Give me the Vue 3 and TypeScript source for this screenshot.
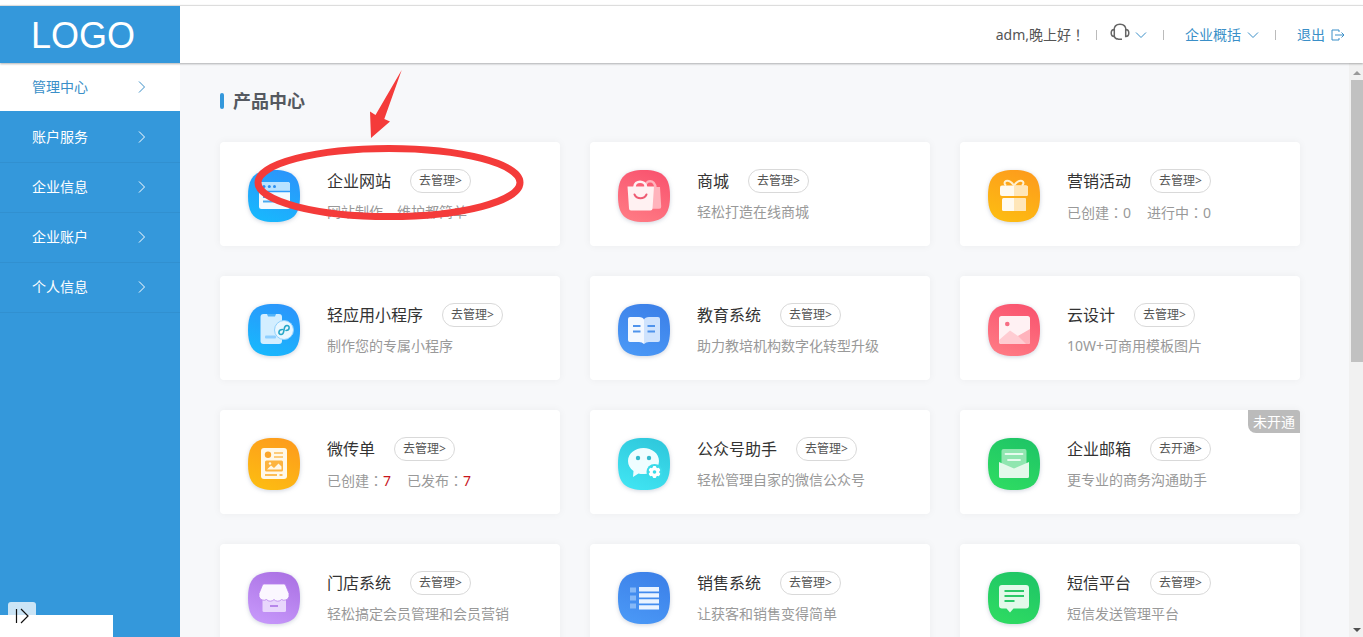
<script setup lang="ts">
import { ref } from 'vue'

interface Stat {
  label: string
  value: number
}
interface Product {
  id: string
  name: string
  action: string
  colors: [string, string]
  desc?: string
  stats?: Stat[]
  hot?: boolean
  badge?: string
}

const navItems = ['管理中心', '账户服务', '企业信息', '企业账户', '个人信息']
const active = ref('管理中心')

const blue: [string, string] = ['#2b95fb', '#18b8fd']
const royal: [string, string] = ['#3c80e8', '#4a98f6']
const pink: [string, string] = ['#f9546f', '#ff7a84']
const amber: [string, string] = ['#fd9c1c', '#fdbc12']
const green: [string, string] = ['#1fc566', '#2edb62']

const products: Product[] = [
  { id: 'site', name: '企业网站', action: '去管理>', desc: '网站制作、维护都简单', colors: blue },
  { id: 'mall', name: '商城', action: '去管理>', desc: '轻松打造在线商城', colors: pink },
  { id: 'gift', name: '营销活动', action: '去管理>', stats: [{ label: '已创建', value: 0 }, { label: '进行中', value: 0 }], colors: amber },
  { id: 'app', name: '轻应用小程序', action: '去管理>', desc: '制作您的专属小程序', colors: blue },
  { id: 'edu', name: '教育系统', action: '去管理>', desc: '助力教培机构数字化转型升级', colors: royal },
  { id: 'design', name: '云设计', action: '去管理>', desc: '10W+可商用模板图片', colors: pink },
  { id: 'flyer', name: '微传单', action: '去管理>', stats: [{ label: '已创建', value: 7 }, { label: '已发布', value: 7 }], hot: true, colors: amber },
  { id: 'wechat', name: '公众号助手', action: '去管理>', desc: '轻松管理自家的微信公众号', colors: ['#2fc8dc', '#40e4f2'] },
  { id: 'mail', name: '企业邮箱', action: '去开通>', desc: '更专业的商务沟通助手', badge: '未开通', colors: green },
  { id: 'store', name: '门店系统', action: '去管理>', desc: '轻松搞定会员管理和会员营销', colors: ['#ab72e4', '#c697fa'] },
  { id: 'sales', name: '销售系统', action: '去管理>', desc: '让获客和销售变得简单', colors: royal },
  { id: 'sms', name: '短信平台', action: '去管理>', desc: '短信发送管理平台', colors: green },
]

const gearTeeth = [0, 60, 120, 180, 240, 300]
</script>

<template>
  <div class="page">
    <header class="header">
      <div class="logo">LOGO</div>
      <div class="tools">
        <span class="greet">adm,晚上好<span class="mark">！</span></span>
        <i class="sep"></i>
        <button class="tool support" type="button" aria-label="客服">
          <svg class="headset" width="20" height="20" viewBox="0 0 20 20" fill="none" stroke="#666" stroke-width="1.5">
            <path d="M4 7.500C4 3.500 6.500 1.200 10 1.200S16 3.500 16 7.500" />
            <path d="M4.300 6.500C2 6.500 1.200 8 1.200 10s.8 3.500 3.100 3.500zM15.700 6.500c2.300 0 3.100 1.500 3.100 3.500s-.8 3.500-3.100 3.500z" />
            <path d="M4.300 13.500c.6 2 1.900 2.600 4 2.600M8 16.200h4" />
          </svg>
          <svg class="down" width="12" height="8" viewBox="0 0 12 8"><path d="M1 1.500l5 5 5-5" /></svg>
        </button>
        <i class="sep"></i>
        <button class="tool overview" type="button">
          企业概括
          <svg class="down" width="12" height="8" viewBox="0 0 12 8"><path d="M1 1.500l5 5 5-5" /></svg>
        </button>
        <i class="sep"></i>
        <a class="tool logout" href="#">
          退出
          <svg class="down" width="14" height="12" viewBox="0 0 14 12"><path d="M8 3V1H1v10h7V9M4 6h9M10.500 3.500L13 6l-2.500 2.500" /></svg>
        </a>
      </div>
    </header>

    <div class="body">
      <nav class="side">
        <a v-for="item in navItems" :key="item" href="#" class="nav" :class="{ on: item === active }" @click.prevent="active = item">
          {{ item }}
          <svg width="8" height="14" viewBox="0 0 8 14"><path d="M1 1.500L6.500 7 1 12.500" /></svg>
        </a>
      </nav>

      <main class="main">
        <h1 class="heading">产品中心</h1>
        <div class="grid">
          <section v-for="p in products" :key="p.id" class="card">
            <svg class="icon" viewBox="0 0 52 52" width="52" height="52" aria-hidden="true">
              <defs>
                <linearGradient :id="'bg-' + p.id" x1="0.7" y1="0" x2="0.3" y2="1">
                  <stop offset="0" :stop-color="p.colors[0]" />
                  <stop offset="1" :stop-color="p.colors[1]" />
                </linearGradient>
              </defs>
              <path :fill="`url(#bg-${p.id})`" d="M26 0C45 0 52 7 52 26S45 52 26 52 0 45 0 26 7 0 26 0Z" />
              <g v-if="p.id === 'site'">
                <rect x="11" y="12" width="31" height="27" rx="2.500" fill="#f3faff" />
                <path d="M11 21v-6.500a2.500 2.500 0 0 1 2.500-2.500h26a2.500 2.500 0 0 1 2.500 2.500V21z" fill="#b9e2ff" />
                <path d="M11 21.500h31" stroke="#2f9cfb" stroke-width="1.500" />
                <g fill="#2b8ff0"><circle cx="16" cy="16.500" r="1.500" /><circle cx="21.300" cy="16.500" r="1.500" /><circle cx="26.500" cy="16.500" r="1.500" /></g>
                <path d="M15 27h9M15 31.500h15" stroke="#4aa9ef" stroke-width="1.800" />
              </g>
              <g v-else-if="p.id === 'mall'">
                <path d="M27 17h15l1.200 19.500a2 2 0 0 1-2 2.200H30z" fill="#ffb3bc" />
                <path d="M27 18c0-9 10-9 10.500 0" fill="none" stroke="#ffb3bc" stroke-width="2.500" />
                <path d="M9.500 16.500h26.500l-1.500 22a2 2 0 0 1-2 2H13a2 2 0 0 1-2-2z" fill="#fff1f2" />
                <path d="M16.500 17c0-7 11-7 11.500 0" fill="none" stroke="#fff1f2" stroke-width="2.700" />
                <path d="M16.500 24.500c2.500 5 9.500 5 12 0" fill="none" stroke="#ee5b73" stroke-width="2" stroke-linecap="round" />
              </g>
              <g v-else-if="p.id === 'gift'">
                <path d="M26 15.500c-3-4-6-5-8-4.500-2 .8-2 3 0 4.500M26 15.500c3-4 6-5 8-4.500 2 .8 2 3 0 4.500" fill="none" stroke="#fff0cf" stroke-width="2" />
                <rect x="12" y="15.500" width="28" height="10.500" rx="2" fill="#fffaf0" />
                <path d="M26 15.500h12a2 2 0 0 1 2 2V24a2 2 0 0 1-2 2H26z" fill="#ffe6b8" />
                <rect x="14" y="28" width="24" height="13" rx="1.500" fill="#fffaf0" />
                <path d="M26 28h10.500a1.500 1.500 0 0 1 1.500 1.500v10a1.500 1.500 0 0 1-1.500 1.500H26z" fill="#ffe6b8" />
              </g>
              <g v-else-if="p.id === 'app'">
                <rect x="12.500" y="10" width="21.500" height="30" rx="3" fill="#d3eeff" />
                <path d="M19 10h9l-1 2.500h-7z" fill="#52b4fa" />
                <rect x="17" y="31.500" width="11" height="3" rx="1" fill="#8fcfff" />
                <circle cx="36" cy="26" r="9.500" fill="#e9f7ff" stroke="#8fd0fd" />
                <path d="M34.500 25.500c-4.500 0-4.500 5-1.500 5s2.500-3 3-4.500 0-4.500 3-4.500 3 5-1 5" fill="none" stroke="#27a7c8" stroke-width="1.600" stroke-linecap="round" />
              </g>
              <g v-else-if="p.id === 'edu'">
                <path d="M10 15a2 2 0 0 1 2-2h9q4 0 5 2.500V40q-2-2-5-2h-9a2 2 0 0 1-2-2z" fill="#f3f8ff" />
                <path d="M42 15a2 2 0 0 0-2-2h-9q-4 0-5 2.500V40q2-2 5-2h9a2 2 0 0 0 2-2z" fill="#cfe3fd" />
                <path d="M15 22h7.500M15 27.500h7.500M29.500 22H37M29.500 27.500H37" stroke="#4f93ec" stroke-width="2" />
              </g>
              <g v-else-if="p.id === 'design'">
                <rect x="11" y="12" width="31" height="28" rx="2.500" fill="#fff1f3" />
                <circle cx="19.300" cy="20" r="2.300" fill="#f76d84" />
                <path d="M11 37.500v-1.500l11-9.500 8 5.500 12-6v12a2 2 0 0 1-2 2H13.500a2.500 2.500 0 0 1-2.500-2.500z" fill="#ffccd2" />
                <path d="M30 32l12-7v13a2 2 0 0 1-2 2H38z" fill="#ffb3bc" />
              </g>
              <g v-else-if="p.id === 'flyer'">
                <rect x="13" y="10" width="26" height="31" rx="3" fill="#fff8e8" />
                <circle cx="20" cy="16.700" r="3.200" fill="#fba62a" />
                <path d="M26 15h9M26 19h9" stroke="#fdbd55" stroke-width="1.700" />
                <rect x="17" y="22.500" width="18" height="11" rx="1.500" fill="#fdb440" />
                <path d="M19 31.500l4-4 3 2.500 4.500-4.500 3 3v3z" fill="#fff8e8" />
                <circle cx="22" cy="25.500" r="1.200" fill="#fff8e8" />
                <path d="M17 37h12M31.500 37h3" stroke="#fdbd55" stroke-width="2" />
              </g>
              <g v-else-if="p.id === 'wechat'">
                <path d="M25.500 10C17 10 10 15.500 10 23c0 4 2 7.500 5.500 10l-.5 6 5.500-3.500c2 .6 4 .7 6 .5C34 36 41 30.500 41 23S34 10 25.500 10z" fill="#effdff" />
                <circle cx="20" cy="20" r="2.200" fill="#35b9cc" /><circle cx="31" cy="20" r="2.200" fill="#35b9cc" />
                <circle cx="36.500" cy="34" r="8" fill="#3bdbe9" />
                <g fill="#fff">
                  <circle cx="36.500" cy="34" r="4.800" />
                  <rect v-for="a in gearTeeth" :key="a" x="34.800" y="28" width="3.400" height="4" rx="1" :transform="`rotate(${a} 36.500 34)`" />
                </g>
                <circle cx="36.500" cy="34" r="1.800" fill="#3bdbe9" />
              </g>
              <g v-else-if="p.id === 'mail'">
                <path d="M13.500 13a2 2 0 0 1 2-2h21a2 2 0 0 1 2 2v14L26 33l-12.500-6z" fill="#90e6b0" />
                <path d="M17.500 16h17M20 22h12" stroke="#e6fbee" stroke-width="1.800" stroke-linecap="round" />
                <path d="M11 24l15 6.500L41 24v14.500a1.500 1.500 0 0 1-1.500 1.500h-27a1.500 1.500 0 0 1-1.500-1.500z" fill="#e3f9ea" />
              </g>
              <g v-else-if="p.id === 'store'">
                <path d="M14.500 25h23.500v13.500a1.500 1.500 0 0 1-1.500 1.500H16a1.500 1.500 0 0 1-1.500-1.500z" fill="#e8d6fc" />
                <path d="M16.500 12h19a2 2 0 0 1 2 1L41 21.500v3a5 5 0 0 1-7.500 3 5 5 0 0 1-7.500 0 5 5 0 0 1-7.500 0 5 5 0 0 1-7.500-3v-3L14.500 13a2 2 0 0 1 2-1z" fill="#fbf7ff" stroke="#b67fec" stroke-width="0.800" />
                <path d="M22 34h8" stroke="#b27de8" stroke-width="1.800" />
              </g>
              <g v-else-if="p.id === 'sales'">
                <path d="M12 15.500h6v5h-6zM12 23.500h6v5h-6zM12 31.500h6v5h-6z" fill="#86b8f7" />
                <path d="M21 15h20v4.500H21zM21 21.200h20v4.300H21zM21 27.300h20v4.200H21zM21 33.300h20v4.200H21z" fill="#eaf3ff" />
              </g>
              <g v-else>
                <path d="M14 13h24a3 3 0 0 1 3 3v17.500a3 3 0 0 1-3 3H25.500L22 40.500l-3.500-4H14a3 3 0 0 1-3-3V16a3 3 0 0 1 3-3z" fill="#e3f9ea" />
                <path d="M16.500 19H36M16.500 24H36M16.500 29h10" stroke="#2cc969" stroke-width="2" />
              </g>
            </svg>
            <div class="info">
              <div class="row">
                <h2 class="name">{{ p.name }}</h2>
                <button class="go" type="button">{{ p.action }}</button>
              </div>
              <p v-if="p.desc" class="desc">{{ p.desc }}</p>
              <p v-else class="desc stats">
                <span v-for="s in p.stats" :key="s.label">{{ s.label }}<span class="mark">：</span><span :class="{ hot: p.hot }">{{ s.value }}</span></span>
              </p>
            </div>
            <span v-if="p.badge" class="badge">{{ p.badge }}</span>
          </section>
        </div>
        <svg class="callout" width="310" height="160" viewBox="0 0 310 160" aria-hidden="true">
          <path d="M181.700 7L164.300 56 170 58.500 151 75 150 48.500 155.500 52z" fill="#f43b3a" />
          <ellipse cx="169" cy="119.500" rx="131" ry="34" fill="none" stroke="#f43b3a" stroke-width="7" />
        </svg>
      </main>

      <div class="scroll" aria-hidden="true">
        <i class="arrow up"></i>
        <div class="track"><div class="thumb"></div></div>
        <i class="arrow dn"></i>
      </div>
    </div>

    <div class="status">
      <button class="expand" type="button" aria-label="展开">
        <svg width="16" height="16" viewBox="0 0 16 16" fill="none" stroke="#111" stroke-width="1.200"><path d="M2.500 1v14M7 1l7 7-7 7" /></svg>
      </button>
    </div>
  </div>
</template>

<style>
body {
  margin: 0;
  overflow: hidden;
}
</style>

<style scoped>
.page {
  position: relative;
  display: flex;
  flex-direction: column;
  height: 100vh;
  box-sizing: border-box;
  padding-top: 5px;
  background: #fff;
  color: #333;
  font: 14px/20px "Noto Sans", "Noto Sans CJK SC", sans-serif;
}
button {
  margin: 0;
  padding: 0;
  border: 0;
  background: none;
  font: inherit;
  color: inherit;
  cursor: pointer;
}
a {
  text-decoration: none;
}
.mark {
  font-family: "Noto Sans CJK TC", sans-serif;
}
.header {
  position: relative;
  z-index: 2;
  flex: none;
  display: flex;
  justify-content: space-between;
  height: 57px;
  border-top: 1px solid #ddd;
  background: #fff;
  box-shadow: 0 1px 2px rgba(0, 0, 0, 0.3);
}
.logo {
  width: 180px;
  box-sizing: border-box;
  padding-left: 31px;
  background: #3498db;
  color: #fff;
  font: 36px/60px "Liberation Sans", Arial, sans-serif;
}
.tools {
  display: flex;
  align-items: center;
  padding-right: 18px;
}
.greet {
  color: #555;
}
.sep {
  width: 1px;
  height: 10px;
  background: #bbb;
}
.greet + .sep {
  margin-left: 11px;
}
.tool {
  display: flex;
  align-items: center;
  gap: 6px;
  color: #3a8fc8;
}
.support {
  gap: 5px;
  margin: 0 16px 0 13px;
}
.headset {
  margin-bottom: 4px;
}
.overview {
  margin: 0 16px 0 21px;
}
.logout {
  margin-left: 21px;
}
.down {
  fill: none;
  stroke: #3a8fc8;
  stroke-width: 1;
}
.body {
  flex: 1;
  min-height: 0;
  display: flex;
}
.side {
  flex: none;
  width: 180px;
  background: #3498db;
}
.nav {
  display: flex;
  align-items: center;
  justify-content: space-between;
  height: 47px;
  padding: 0 34px 2px 32px;
  border-bottom: 1px solid #3190d0;
  color: #fff;
}
.nav svg {
  fill: none;
  stroke: currentColor;
}
.nav.on {
  height: 48px;
  margin-bottom: 2px;
  padding-bottom: 0;
  border-bottom: 0;
  background: #fff;
  color: #3a8fc8;
}
.main {
  position: relative;
  flex: 1;
  min-width: 0;
  overflow: hidden;
  padding: 28px 49px 0 40px;
  background: #f7f8fa;
}
.heading {
  display: flex;
  align-items: center;
  gap: 9px;
  margin: 0 0 31px;
  color: #555960;
  font-size: 18px;
  line-height: 20px;
}
.heading::before {
  content: "";
  width: 4px;
  height: 16px;
  border-radius: 2px;
  background: #3498db;
}
.grid {
  display: grid;
  grid-template-columns: repeat(3, minmax(0, 1fr));
  gap: 30px;
}
.card {
  position: relative;
  display: flex;
  align-items: flex-end;
  gap: 27px;
  padding: 27px 28px 24px;
  border-radius: 4px;
  background: #fff;
  box-shadow: 0 0 8px rgba(0, 0, 0, 0.05);
}
.icon {
  flex: none;
  filter: drop-shadow(0 1px 2px rgba(60, 80, 120, 0.25));
}
.info {
  min-width: 0;
  white-space: nowrap;
}
.row {
  display: flex;
  align-items: center;
  gap: 19px;
  margin-bottom: 9px;
}
.name {
  margin: 0;
  font-size: 16px;
  font-weight: 400;
  line-height: 24px;
}
.go {
  height: 24px;
  padding: 0 8px;
  border: 1px solid #d9d9d9;
  border-radius: 12px;
  color: #555;
  font-size: 12px;
  line-height: 22px;
}
.desc {
  height: 20px;
  margin: 0;
  color: #999;
}
.stats {
  display: flex;
  gap: 16px;
}
.hot {
  color: #c8161d;
}
.badge {
  position: absolute;
  top: 0;
  right: 0;
  padding: 0 5px;
  border-radius: 0 3px 0 8px;
  background: #bbb;
  color: #fff;
  line-height: 23px;
}
.callout {
  position: absolute;
  left: 40px;
  top: 0;
  pointer-events: none;
}
.scroll {
  flex: none;
  display: flex;
  flex-direction: column;
  align-items: center;
  justify-content: space-between;
  width: 14px;
  box-sizing: border-box;
  padding: 8px 0 5px 2px;
  background: #f1f1f1;
}
.arrow {
  border: 4px solid transparent;
}
.up {
  border-top: 0;
  border-bottom-color: #999;
}
.dn {
  border-bottom: 0;
  border-top-color: #505050;
}
.track {
  flex: 1;
  align-self: stretch;
  margin: 5px 0;
}
.thumb {
  height: 52%;
  background: #c1c1c1;
}
.status {
  position: absolute;
  z-index: 3;
  left: 0;
  bottom: 0;
  width: 113px;
  height: 22px;
  background: #fff;
}
.expand {
  position: absolute;
  left: 8px;
  bottom: 0;
  display: flex;
  justify-content: center;
  box-sizing: border-box;
  width: 28px;
  height: 35px;
  padding-top: 6px;
  border-radius: 3px 3px 0 0;
  background: linear-gradient(#cce5f6 13px, #fff 13px);
}
</style>
